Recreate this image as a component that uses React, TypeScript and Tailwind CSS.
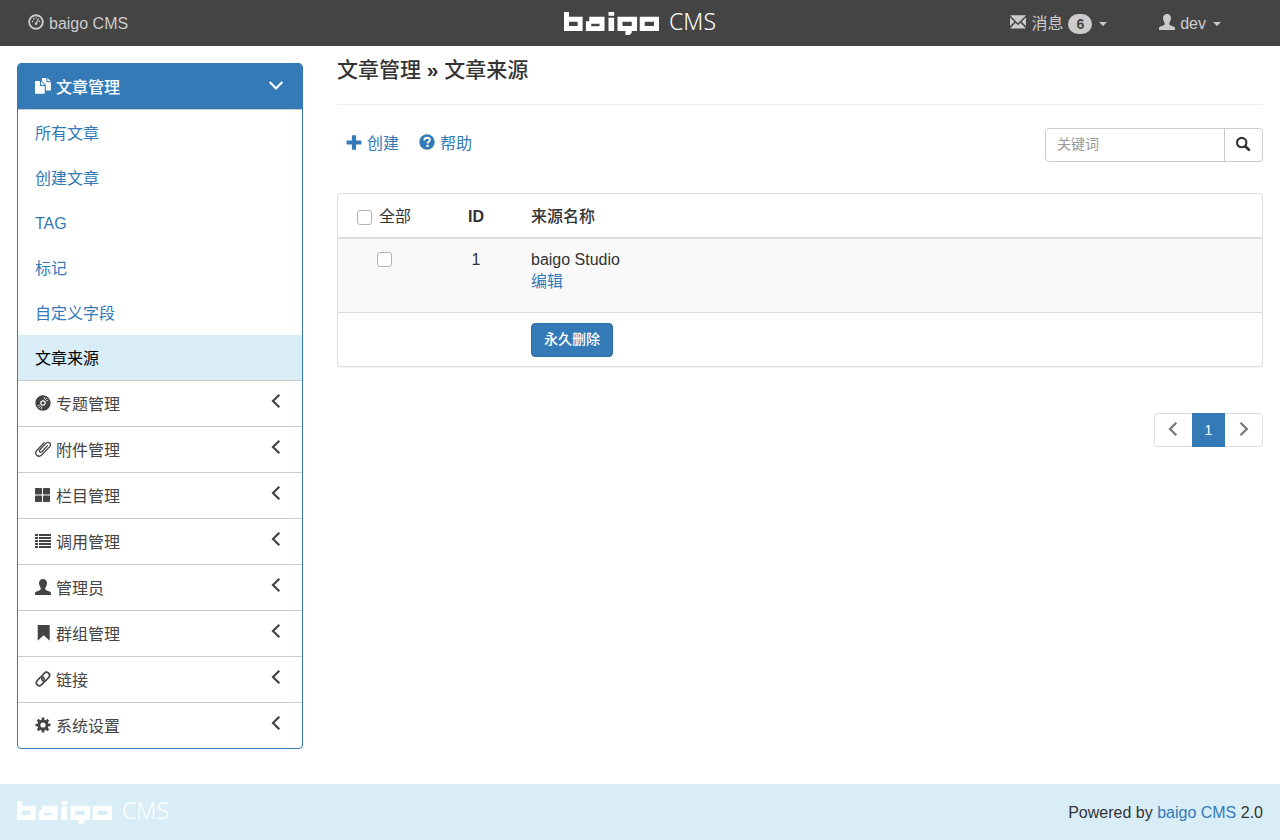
import type { ReactNode } from "react";

function Icon({ children, className = "mb-1" }: { children: ReactNode; className?: string }) {
  return (
    <svg viewBox="0 0 16 16" className={`size-4 shrink-0 ${className}`} fill="currentColor" aria-hidden="true">
      {children}
    </svg>
  );
}

const Dashboard = () => (
  <Icon>
    <circle cx="8" cy="8" r="6.8" fill="none" stroke="currentColor" strokeWidth="1.9" />
    <circle cx="4.6" cy="7.4" r=".8" />
    <circle cx="5.7" cy="4.9" r=".8" />
    <circle cx="8.1" cy="4" r=".8" />
    <circle cx="11.4" cy="7.4" r=".8" />
    <path d="M10.1 4.2l1 .5-2 4.1a1.3 1.3 0 1 1-1.1-.5z" />
  </Icon>
);

const Envelope = () => (
  <Icon>
    <path d="M0 1.3h16L8 9.200zM0 3.200l4.400 4.500L0 12zM16 3.200v8.800l-4.400-4.300zM0 14.500l5.500-5.800L8 11.200l2.500-2.500 5.500 5.800z" />
  </Icon>
);

const User = () => (
  <Icon>
    <path d="M8 0c2.500 0 4 1.700 4 4.100 0 1.100-.3 1.800-.5 2.500-.3 1.100-.7 1.700-1.200 2.200v1.300c0 .6.3.9.8 1.100l3.400 1.300c1 .4 1.500.9 1.500 1.800V16H0v-1.700c0-.9.5-1.400 1.500-1.800l3.400-1.300c.5-.2.8-.5.8-1.100V8.800c-.5-.5-.9-1.100-1.200-2.200C4.300 5.900 4 5.200 4 4.100 4 1.700 5.500 0 8 0z" />
  </Icon>
);

const Duplicate = () => (
  <Icon>
    <path d="M7 0h4.300v4.200H15.900V12.500H10.800V7L7 3z" />
    <path d="M12.300 0L15.900 3.300H12.300z" />
    <path d="M0 3h5v5h4.700V15.700H0z" />
    <path d="M6 3.200L9.700 7H6z" />
  </Icon>
);

const Disc = () => (
  <Icon>
    <path
      fillRule="evenodd"
      d="M8 .3a7.700 7.700 0 1 1 0 15.400A7.700 7.700 0 0 1 8 .3zM8 5.200a2.800 2.800 0 1 0 0 5.600 2.800 2.800 0 0 0 0-5.600zM8 6.400a1.600 1.600 0 1 1 0 3.200 1.600 1.600 0 0 1 0-3.200z"
    />
    <path
      d="M9 4.400L9.900 2M10.200 4.900L12.100 3M11.200 6L13.600 4.800M7 11.600L6.100 14M5.800 11.100L3.900 13M4.800 10L2.400 11.200"
      stroke="#fff"
      strokeWidth=".8"
    />
  </Icon>
);

const Paperclip = () => (
  <Icon>
    <path
      d="M12.700 4.400L6.900 10.700C6.300 11.400 5.300 11.400 4.800 10.900S4.300 9.500 4.900 8.800L10.800 2.400C12 1.100 13.700 1 14.700 2S15.700 4.600 14.500 5.900L6.900 13.700C5.200 15.400 3.100 15.500 1.700 14.200S.4 10.900 2 9.200L9.400 1.400"
      fill="none"
      stroke="currentColor"
      strokeWidth="1.300"
    />
  </Icon>
);

const Blocks = () => (
  <Icon>
    <rect x="0" y="1" width="7" height="6.400" rx=".7" />
    <rect x="8" y="1" width="7" height="6.400" rx=".7" />
    <rect x="0" y="8.600" width="7" height="6.400" rx=".7" />
    <rect x="8" y="8.600" width="7" height="6.400" rx=".7" />
  </Icon>
);

const List = () => (
  <Icon>
    <path d="M0 1h3v2H0zM4 1h12v2H4zM0 4h3v2H0zM4 4h12v2H4zM0 7h3v2H0zM4 7h12v2H4zM0 10h3v2H0zM4 10h12v2H4zM0 13h3v2H0zM4 13h12v2H4z" />
  </Icon>
);

const Bookmark = () => (
  <Icon>
    <path d="M2.700 0H14.700V15.700L8.700 10.300 2.700 15.700z" />
  </Icon>
);

const Chain = () => (
  <Icon>
    <g fill="none" stroke="currentColor" strokeWidth="1.700">
      <path d="M6.300 5.500L9.300 2.300C10.600 1 12.300 1 13.600 2.200S14.900 5.200 13.700 6.500L11 9.300C10 10.300 8.500 10.300 7.500 9.300 6.900 8.700 6.700 7.900 6.900 7.100" />
      <path d="M9.700 10.500L6.700 13.700C5.400 15 3.700 15 2.400 13.800S1.100 10.800 2.300 9.500L5 6.700C6 5.700 7.500 5.700 8.500 6.700 9.100 7.300 9.300 8.100 9.100 8.900" />
    </g>
  </Icon>
);

const Cog = () => (
  <Icon>
    <circle cx="8" cy="8" r="4.100" fill="none" stroke="currentColor" strokeWidth="3" />
    <path
      d="M8 .5v3M8 12.500v3M.5 8h3M12.500 8h3M2.700 2.700l2.100 2.100M11.200 11.200l2.100 2.100M2.700 13.300l2.100-2.100M11.200 4.800l2.100-2.100"
      stroke="currentColor"
      strokeWidth="2.700"
    />
  </Icon>
);

const Plus = () => (
  <Icon>
    <path d="M6.500 1.200h3q.6 0 .6.600v4.600h4.700q.6 0 .6.600v3q0 .6-.6.600h-4.700v4.600q0 .6-.6.600h-3q-.6 0-.6-.6v-4.600H1.200q-.6 0-.6-.6v-3q0-.6.6-.6h4.700V1.800q0-.6.6-.6z" />
  </Icon>
);

const Question = () => (
  <Icon>
    <circle cx="8" cy="8" r="7.700" />
    <path d="M5.300 6.500C5.300 4.500 6.300 3.700 8 3.700s2.800.9 2.800 2.200c0 1.800-2.300 1.900-2.300 3.700" fill="none" stroke="#fff" strokeWidth="2" />
    <path d="M7.300 10.800h2.300v2.100H7.300z" fill="#fff" />
  </Icon>
);

const Search = () => (
  <Icon className="mr-px mb-[2px]">
    <circle cx="6.700" cy="6.600" r="4.700" fill="none" stroke="currentColor" strokeWidth="2.100" />
    <path d="M10.200 10.200l3.700 3.600" stroke="currentColor" strokeWidth="2.700" strokeLinecap="round" />
  </Icon>
);

const chevrons = {
  left: "M10.300 1.700L4 8l6.300 6.300",
  right: "M4.500 1.700L10.800 8l-6.300 6.300",
  down: "M.7 4L7 10.500 13.300 4",
};

function Chevron({ to, className }: { to: keyof typeof chevrons; className: string }) {
  return (
    <Icon className={className}>
      <path d={chevrons[to]} fill="none" stroke="currentColor" strokeWidth="2.200" />
    </Icon>
  );
}

const Caret = () => (
  <svg viewBox="0 0 8 4" className="ml-[2px] h-1 w-2" fill="currentColor" aria-hidden="true">
    <path d="M0 0h8L4 4z" />
  </svg>
);

function Logo() {
  return (
    <span className="flex items-start gap-[10px] text-white">
      <svg viewBox="0 0 286 69" className="h-[23px] w-[95px]" fill="currentColor" fillRule="evenodd" role="img" aria-label="baigo">
        <path d="M0 0h15v14h41v43H0zM15 29v13h26V29z" />
        <path d="M76 14h46v43H66V28h10zM82 35v8h25v-8z" />
        <path d="M134 0h17v11h-17zM134 17h17v40h-17z" />
        <path d="M161 14h59v43h-16v5l-6 7h-13V57h-24zM176 29v13h28V29z" />
        <path d="M228 14h58v43h-58zM243 29v13h28V29z" />
      </svg>
      <span className="font-['Noto_Sans',sans-serif] text-[23px] leading-[18px] font-light">CMS</span>
    </span>
  );
}

const articleLinks = ["所有文章", "创建文章", "TAG", "标记", "自定义字段", "文章来源"];

const groups = [
  { label: "专题管理", icon: <Disc /> },
  { label: "附件管理", icon: <Paperclip /> },
  { label: "栏目管理", icon: <Blocks /> },
  { label: "调用管理", icon: <List /> },
  { label: "管理员", icon: <User /> },
  { label: "群组管理", icon: <Bookmark /> },
  { label: "链接", icon: <Chain /> },
  { label: "系统设置", icon: <Cog /> },
];

const checkbox =
  "size-[15px] shrink-0 appearance-none rounded-[3px] border border-[#b3b3b3] bg-white checked:bg-[#337ab7]";

export default function App() {
  return (
    <div className="flex min-h-screen flex-col bg-white font-['Liberation_Sans','Noto_Sans_CJK_SC',sans-serif] text-base leading-[22px] text-[#333]">
      <header className="grid h-[46px] grid-cols-[1fr_auto_1fr] items-center bg-[#444] text-[#ccc]">
        <a href="#" className="flex items-center gap-[5px] justify-self-start pt-[2px] pl-7">
          <Dashboard />
          baigo CMS
        </a>
        <Logo />
        <nav className="flex items-center justify-end gap-[52px] pt-[2px] pr-[59px]">
          <button type="button" className="flex items-center gap-[5px]">
            <Envelope />
            消息
            <span className="rounded-full bg-[#ccc] px-2 text-sm leading-5 font-bold text-[#444]">6</span>
            <Caret />
          </button>
          <button type="button" className="flex items-center gap-[5px]">
            <User />
            dev
            <Caret />
          </button>
        </nav>
      </header>

      <div className="flex flex-1 pb-[35px]">
        <aside className="w-1/4 px-[17px] pt-[17px]">
          <nav className="overflow-hidden rounded border border-[#337ab7]">
            <a
              href="#"
              className="flex h-[45px] items-center gap-[5px] bg-[#337ab7] px-[17px] pt-[3px] font-medium text-white"
            >
              <Duplicate />
              文章管理
              <Chevron to="down" className="mb-1 ml-auto" />
            </a>
            <ul className="border-t border-[#ccc]">
              {articleLinks.map((label) => (
                <li key={label}>
                  <a
                    href="#"
                    className={`flex h-[45px] items-center px-[17px] pt-[3px] ${
                      label === "文章来源" ? "bg-[#d9edf7] text-black" : "text-[#337ab7]"
                    }`}
                  >
                    {label}
                  </a>
                </li>
              ))}
            </ul>
            {groups.map(({ label, icon }) => (
              <a
                key={label}
                href="#"
                className="flex h-[46px] items-center gap-[5px] border-t border-[#ccc] px-[17px] pt-[3px] text-[#444]"
              >
                {icon}
                {label}
                <Chevron to="left" className="mb-2 ml-auto" />
              </a>
            ))}
          </nav>
        </aside>

        <main className="min-w-0 flex-1 px-[17px]">
          <h1 className="border-b border-[#eee] pt-3 pb-[23px] text-[21px] leading-[23px] font-medium">
            文章管理 <b>»</b> 文章来源
          </h1>

          <div className="mt-[23px] flex items-start justify-between">
            <div className="flex gap-5 pt-[5px] pl-[9px] text-[#337ab7]">
              <a href="#" className="flex items-center gap-[5px]">
                <Plus />
                创建
              </a>
              <a href="#" className="flex items-center gap-[5px]">
                <Question />
                帮助
              </a>
            </div>
            <form className="flex h-[34px] rounded border border-[#ccc]" role="search">
              <input
                type="text"
                aria-label="关键词"
                placeholder="关键词"
                className="w-[178px] rounded-l px-[11px] pb-[2px] text-sm placeholder:text-[#999]"
              />
              <button type="button" aria-label="搜索" className="flex w-[38px] items-center justify-center border-l border-[#ccc]">
                <Search />
              </button>
            </form>
          </div>

          <div className="mt-[31px] rounded border border-[#ddd] shadow-[0_1px_1px_rgba(0,0,0,0.05)]">
            <table className="w-full table-fixed border-collapse">
              <colgroup>
                <col className="w-[92px]" />
                <col className="w-[92px]" />
                <col />
              </colgroup>
              <thead>
                <tr className="h-[44px] border-b-2 border-[#ddd]">
                  <th className="px-0 pt-[2px] pb-0 font-normal">
                    <label className="flex items-center justify-center gap-[7px]">
                      <input type="checkbox" className={`mt-[2px] ${checkbox}`} />
                      全部
                    </label>
                  </th>
                  <th className="px-0 pt-[2px] pb-0 font-bold">ID</th>
                  <th className="px-[9px] pt-[2px] pb-0 text-left font-medium">来源名称</th>
                </tr>
              </thead>
              <tbody className="align-top">
                <tr className="h-[74px] border-b border-[#ddd] bg-[#f9f9f9]">
                  <td className="pt-[13px] text-center">
                    <input type="checkbox" aria-label="baigo Studio" className={`${checkbox} mx-auto block`} />
                  </td>
                  <td className="pt-[10px] text-center">1</td>
                  <td className="px-[9px] pt-[10px]">
                    baigo Studio
                    <br />
                    <a href="#" className="text-[#337ab7]">
                      编辑
                    </a>
                  </td>
                </tr>
                <tr>
                  <td />
                  <td />
                  <td className="px-[9px] pt-[10px] pb-[9px]">
                    <button
                      type="button"
                      className="block h-[34px] rounded border border-[#2e6da4] bg-[#337ab7] px-[12px] pb-[2px] text-sm font-medium text-white"
                    >
                      永久删除
                    </button>
                  </td>
                </tr>
              </tbody>
            </table>
          </div>

          <nav className="mt-[46px] flex justify-end text-sm" aria-label="分页">
            <div className="flex h-[34px] rounded border border-[#ddd] text-[#777]">
              <a href="#" aria-label="上一页" className="flex w-[37px] items-center justify-center">
                <Chevron to="left" className="mb-[2px]" />
              </a>
              <a href="#" className="-my-px flex w-[33px] items-center justify-center bg-[#337ab7] text-white">
                1
              </a>
              <a href="#" aria-label="下一页" className="flex w-[37px] items-center justify-center">
                <Chevron to="right" className="mb-[2px]" />
              </a>
            </div>
          </nav>
        </main>
      </div>

      <footer className="flex h-14 items-center justify-between bg-[#d9edf7] px-[17px]">
        <Logo />
        <p className="pt-[2px]">
          Powered by{" "}
          <a href="#" className="text-[#337ab7]">
            baigo CMS
          </a>{" "}
          2.0
        </p>
      </footer>
    </div>
  );
}
